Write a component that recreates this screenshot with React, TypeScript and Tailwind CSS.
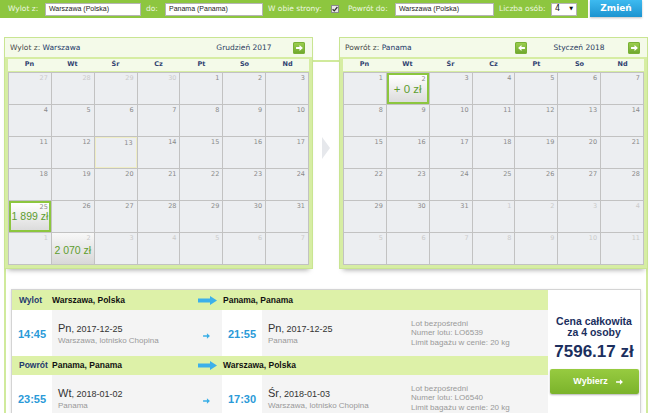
import clsx from "clsx";

type Day = {
  n: number;
  other?: boolean;
  sel?: boolean;
  grad?: boolean;
  today?: boolean;
  price?: string;
  priceTop?: boolean;
  big?: boolean;
};

const range = (from: number, to: number, other = false): Day[] =>
  Array.from({ length: to - from + 1 }, (_, i) => ({ n: from + i, other }));

const dec: Day[] = [...range(27, 30, true), ...range(1, 31), ...range(1, 7, true)];
dec[4 + 12] = { ...dec[4 + 12], today: true };
dec[4 + 24] = { ...dec[4 + 24], sel: true, price: "1 899 zł", priceTop: true };
dec[36] = { ...dec[36], grad: true, price: "2 070 zł" };

const jan: Day[] = [...range(1, 31), ...range(1, 11, true)];
jan[1] = { ...jan[1], sel: true, price: "+ 0 zł", big: true };

const dayNames = ["Pn", "Wt", "Śr", "Cz", "Pt", "So", "Nd"];

function ArrowBtn({ dir }: { dir: "left" | "right" }) {
  return (
    <div className="flex h-[12px] w-[12px] items-center justify-center rounded-[2px] bg-linear-to-b from-[#9fd250] to-[#6da52b] shadow-[inset_0_0_0_1px_#78b035]">
      <svg width="7" height="6" viewBox="0 0 8 7">
        <path
          d={dir === "right" ? "M0 2.3h4V0l4 3.5L4 7V4.7H0z" : "M8 2.3H4V0L0 3.5 4 7V4.7h4z"}
          fill="white"
        />
      </svg>
    </div>
  );
}

function Calendar({
  label,
  city,
  title,
  days,
  prev,
  className,
}: {
  label: string;
  city: string;
  title: string;
  days: Day[];
  prev?: boolean;
  className?: string;
}) {
  return (
    <div
      className={clsx(
        "w-[309px] border border-[#c9e592] bg-[#d6eda3] shadow-[0_5px_5px_-4px_rgba(0,0,0,0.35)]",
        className
      )}
    >
      <div className="flex h-[19px] items-center bg-[#f4fae9] pl-[5px] pr-[7px] font-['DejaVu_Sans',sans-serif] text-[7.5px]">
        <span className="text-[#4a4a4a]">
          {label} <span className="text-[#22396a]">{city}</span>
        </span>
        <div className="ml-auto flex items-center">
          {prev && (
            <div className="mr-[17px]">
              <ArrowBtn dir="left" />
            </div>
          )}
          <span className="w-[70px] text-center text-[#2b3c60]">{title}</span>
          <div className="ml-[14px]">
            <ArrowBtn dir="right" />
          </div>
        </div>
      </div>
      <div className="px-[3px] pt-[2px] pb-[3px]">
        <div className="mb-px grid h-[12px] grid-cols-7 items-center bg-[#f4fae9] text-center font-['DejaVu_Sans',sans-serif] text-[6.5px] font-bold text-[#2f4170]">
          {dayNames.map((d) => (
            <span key={d}>{d}</span>
          ))}
        </div>
        <div className="grid grid-cols-7 gap-px border border-[#c2c2c2] bg-[#c2c2c2]">
          {days.map((d, i) => (
            <div
              key={i}
              className={clsx(
                "flex h-[31px] flex-col",
                d.sel
                  ? "border-2 border-[#8cc63f] bg-linear-to-b from-white to-[#dcdcdc]"
                  : d.grad
                  ? "bg-linear-to-b from-[#f8f8f8] to-[#d8d8d8]"
                  : "bg-[#eceef1]",
                d.today && "border border-[#efedc4]"
              )}
            >
              <span
                className={clsx(
                  "text-right font-['DejaVu_Sans',sans-serif] text-[6.5px] leading-[8px]",
                  d.sel ? "pr-[1px] pt-0" : "pr-[3px] pt-[1px]",
                  d.other ? "text-[#cacaca]" : "text-[#8a8a8a]"
                )}
              >
                {d.n}
              </span>
              {d.price && (
                <span
                  className={clsx(
                    "text-center font-['Liberation_Sans',sans-serif] leading-[11px] text-[#5e9d2f] whitespace-nowrap",
                    d.big ? "mt-[1px] text-[11.5px]" : "text-[10.5px]",
                    d.priceTop ? "mt-0" : !d.big && "mt-[3px]"
                  )}
                >
                  {d.price}
                </span>
              )}
            </div>
          ))}
        </div>
      </div>
    </div>
  );
}

function BigArrow() {
  return (
    <svg width="19" height="9" viewBox="0 0 19 9">
      <path d="M0 2.5h12V0l7 4.5L12 9V6.5H0z" fill="#3cb0ea" />
    </svg>
  );
}

function SmallArrow() {
  return (
    <svg width="7" height="6" viewBox="0 0 8 7">
      <path d="M0 2.6h4.5V0.3L8 3.5 4.5 6.7V4.4H0z" fill="#3aaee6" />
    </svg>
  );
}

type Leg = {
  label: string;
  from: string;
  to: string;
  dep: string;
  depDay: string;
  depDate: string;
  depPlace: string;
  arr: string;
  arrDay: string;
  arrDate: string;
  arrPlace: string;
  flightNo: string;
};

const legs: Leg[] = [
  {
    label: "Wylot",
    from: "Warszawa, Polska",
    to: "Panama, Panama",
    dep: "14:45",
    depDay: "Pn",
    depDate: "2017-12-25",
    depPlace: "Warszawa, lotnisko Chopina",
    arr: "21:55",
    arrDay: "Pn",
    arrDate: "2017-12-25",
    arrPlace: "Panama",
    flightNo: "LO6539",
  },
  {
    label: "Powrót",
    from: "Panama, Panama",
    to: "Warszawa, Polska",
    dep: "23:55",
    depDay: "Wt",
    depDate: "2018-01-02",
    depPlace: "Panama",
    arr: "17:30",
    arrDay: "Śr",
    arrDate: "2018-01-03",
    arrPlace: "Warszawa, lotnisko Chopina",
    flightNo: "LO6540",
  },
];

function LegBlock({ leg, first }: { leg: Leg; first?: boolean }) {
  return (
    <div>
      <div
        className={clsx(
          "flex items-center bg-[#ddf1a8] text-[8.5px] font-bold",
          first ? "h-[20px]" : "h-[19px]"
        )}
      >
        <div className="w-[40px] pl-[7px] text-[#1f3a6e]">{leg.label}</div>
        <div className="flex w-[170px] items-center justify-between pr-[5px] text-[#111]">
          <span>{leg.from}</span>
          <BigArrow />
        </div>
        <div className="pl-px text-[#111]">{leg.to}</div>
      </div>
      <div className="flex h-[46px] text-[#333]">
        <div className="flex w-[40px] items-center justify-center bg-white pt-[3px] text-[11px] font-bold text-[#2a9ad8]">
          {leg.dep}
        </div>
        <div className="flex w-[170px] items-center justify-between bg-[#f4f4f4] pl-[6px] pr-[12px]">
          <div className="leading-[11px]">
            <div>
              <span className="text-[11px]">{leg.depDay}</span>
              <span className="text-[9px]">, {leg.depDate}</span>
            </div>
            <div className="text-[8px] text-[#999]">{leg.depPlace}</div>
          </div>
          <div className="pt-[6px]">
            <SmallArrow />
          </div>
        </div>
        <div className="flex w-[40px] items-center justify-center bg-white pt-[3px] text-[11px] font-bold text-[#2a9ad8]">
          {leg.arr}
        </div>
        <div className="flex w-[143px] items-center bg-[#f4f4f4] pl-[6px]">
          <div className="leading-[11px]">
            <div>
              <span className="text-[11px]">{leg.arrDay}</span>
              <span className="text-[9px]">, {leg.arrDate}</span>
            </div>
            <div className="text-[8px] text-[#999]">{leg.arrPlace}</div>
          </div>
        </div>
        <div className="flex w-[143px] items-center bg-[#f4f4f4] pl-[6px] text-[8px] leading-[9.5px] text-[#999]">
          <div>
            <div>Lot bezpośredni</div>
            <div>Numer lotu: {leg.flightNo}</div>
            <div>Limit bagażu w cenie: 20 kg</div>
          </div>
        </div>
      </div>
    </div>
  );
}

function Input({ value, w }: { value: string; w: string }) {
  return (
    <div
      className={clsx(
        "flex h-[13px] items-center border border-[#b5b5b5] bg-white pl-[3px] font-['Liberation_Sans',sans-serif] text-[7px] text-[#222]",
        w
      )}
    >
      {value}
    </div>
  );
}

export default function App() {
  return (
    <div className="h-[413px] w-[650px] overflow-hidden bg-white font-['Liberation_Sans',sans-serif]">
      {/* search bar */}
      <div className="flex h-[18px]">
        <div className="flex w-[588px] items-center bg-[#8dc63f] pl-[8px] font-['DejaVu_Sans',sans-serif] text-[7.5px] text-[#eef7e2]">
          <span className="w-[37px]">Wylot z:</span>
          <Input value="Warszawa (Polska)" w="w-[96px]" />
          <span className="ml-[5px] w-[19px]">do:</span>
          <Input value="Panama (Panama)" w="w-[98px]" />
          <span className="ml-[5px] w-[63px]">W obie strony:</span>
          <div className="flex h-[8px] w-[8px] items-center justify-center border border-[#8a8a8a] bg-[#e8e8e8]">
            <svg width="6" height="6" viewBox="0 0 6 6">
              <path d="M0.6 3.2 2.3 4.9 5.4 1" stroke="#333" strokeWidth="1.3" fill="none" />
            </svg>
          </div>
          <span className="ml-[9px] w-[47px]">Powrót do:</span>
          <Input value="Warszawa (Polska)" w="w-[99px]" />
          <span className="ml-[5px] w-[52px]">Liczba osób:</span>
          <div className="flex h-[13px] w-[26px] items-center justify-between border border-[#b5b5b5] bg-white pl-[3px] pr-[3px] text-[#111]">
            <span className="text-[8px]">4</span>
            <span className="text-[5px]">▼</span>
          </div>
        </div>
        <div className="ml-[2px] flex h-[17px] w-[52px] items-center justify-center bg-linear-to-b from-[#3dbaf0] to-[#1c94d0] font-['DejaVu_Sans',sans-serif] text-[9px] font-bold text-white shadow-[0_1px_2px_rgba(0,0,0,0.25)]">
          Zmień
        </div>
      </div>

      {/* frame */}
      <div className="ml-[4px] mr-[2px] mt-[42px] h-[400px] border-x-2 border-t-2 border-[#d0ea9c]">
        <div className="-mt-[25px] flex items-center justify-between">
          <Calendar
            className="-ml-[2px]"
            label="Wylot z:"
            city="Warszawa"
            title="Grudzień 2017"
            days={dec}
          />
          <svg width="8" height="22" viewBox="0 0 8 22" className="mb-[10px]">
            <polygon points="0,0 8,11 0,22" fill="#e6e8ec" />
          </svg>
          <Calendar
            className="-mr-[2px]"
            label="Powrót z:"
            city="Panama"
            title="Styczeń 2018"
            days={jan}
            prev
          />
        </div>

        {/* result */}
        <div className="mx-[5px] mt-[20px] flex border border-[#d4d4d4] shadow-[0_1px_3px_rgba(0,0,0,0.12)]">
          <div className="w-[536px]">
            {legs.map((l, i) => (
              <LegBlock key={l.label} leg={l} first={i === 0} />
            ))}
          </div>
          <div className="flex w-[92px] flex-col items-center bg-white pt-[26px]">
            <div className="text-center text-[10.5px] font-bold leading-[11px] text-[#1b2f5e]">
              Cena całkowita
              <br />
              za 4 osoby
            </div>
            <div className="mt-[4px] text-[17px] font-bold leading-[20px] text-[#1b2f5e]">7596.17 zł</div>
            <div className="mt-[7px] flex h-[25px] w-[89px] items-center justify-center gap-[8px] rounded-[2px] bg-linear-to-b from-[#97cb40] to-[#7bb32b] pl-[8px] text-[9px] font-bold text-white shadow-[0_1px_2px_rgba(0,0,0,0.3)]">
              <span>Wybierz</span>
              <svg width="7" height="6" viewBox="0 0 8 7">
                <path d="M0 2.6h4.5V0.3L8 3.5 4.5 6.7V4.4H0z" fill="white" />
              </svg>
            </div>
          </div>
        </div>
      </div>
    </div>
  );
}
